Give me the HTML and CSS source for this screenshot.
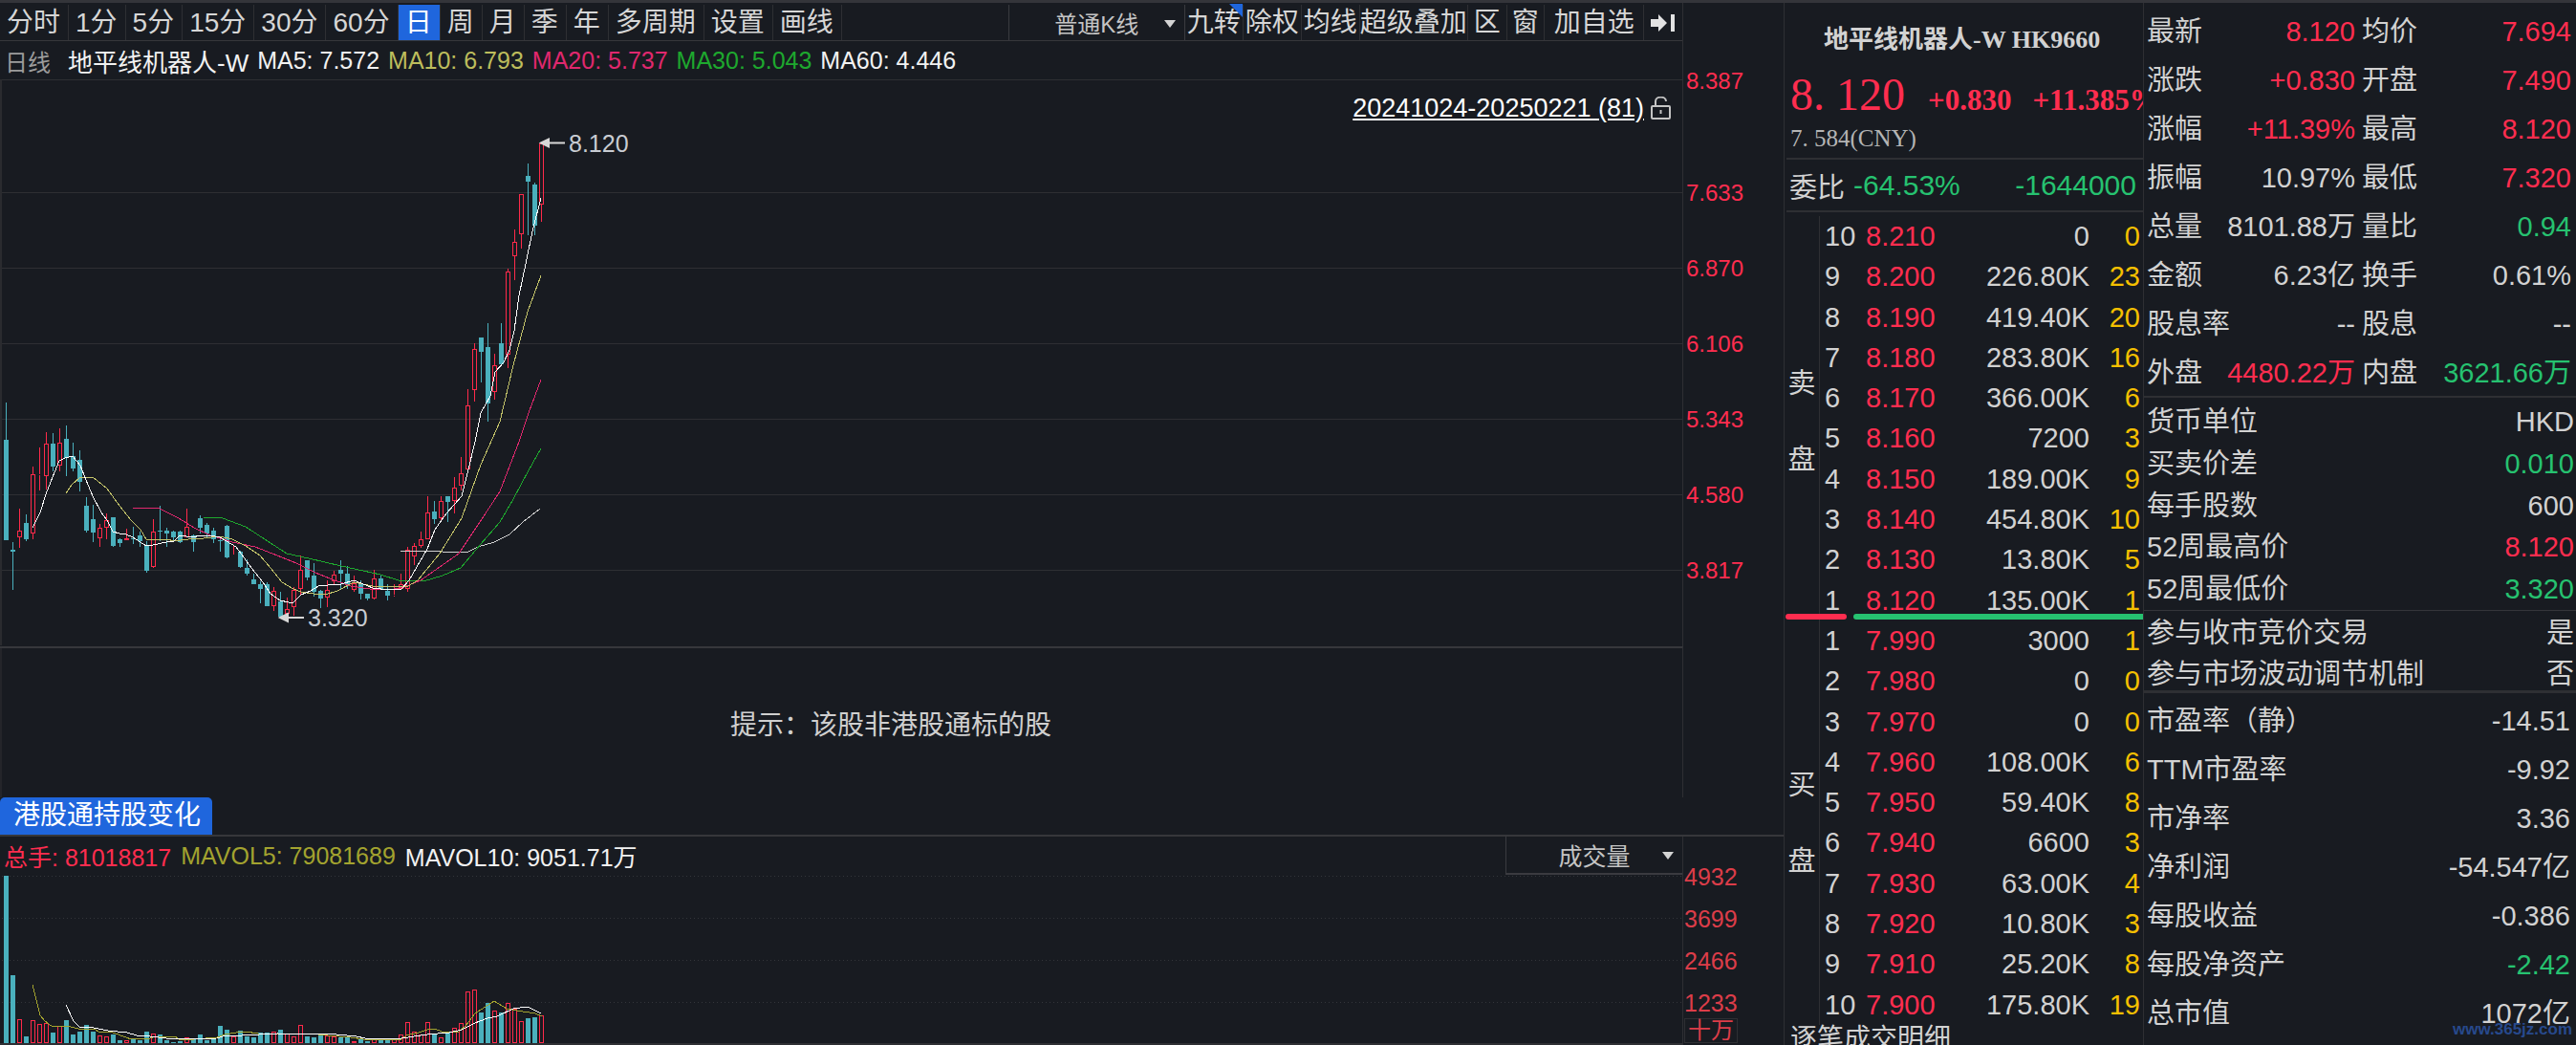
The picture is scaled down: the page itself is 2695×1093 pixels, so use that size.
FILE: index.html
```html
<!DOCTYPE html>
<html lang="zh-CN">
<head>
    <meta charset="UTF-8">
    <title>地平线机器人-W HK9660</title>
    <link rel="stylesheet" href="styles.css">
</head>
<body>

    <div class="app">

        <!-- Charts -->
        <div class="left">
            <div class="upper">
                <div class="chart-col">
                    <div class="toolbar">
                        <span class="tool">分时</span>
                        <span class="tool">1分</span>
                        <span class="tool">5分</span>
                        <span class="tool">15分</span>
                        <span class="tool">30分</span>
                        <span class="tool">60分</span>
                        <span class="tool active">日</span>
                        <span class="tool">周</span>
                        <span class="tool">月</span>
                        <span class="tool">季</span>
                        <span class="tool">年</span>
                        <span class="tool">多周期</span>
                        <span class="tool">设置</span>
                        <span class="tool">画线</span>
                        <div class="select kline-select">普通K线</div>
                        <span class="tool tight marked">九转</span>
                        <span class="tool tight">除权</span>
                        <span class="tool tight">均线</span>
                        <span class="tool tighter">超级叠加</span>
                        <span class="tool roomy">区</span>
                        <span class="tool roomy small-pad">窗</span>
                        <span class="tool widest">加自选</span>
                        <span class="tool icon-tool">
                            <svg width="26" height="18" viewBox="0 0 26 18"><path d="M0 5h8V0l9 9-9 9v-5H0z" fill="#e2e2e2"/><rect x="21" y="0" width="4" height="18" fill="#e2e2e2"/></svg>
                        </span>
                    </div>
                    <div class="legend">
                        <span class="period">日线</span>
                        <span class="stock-name">地平线机器人-W</span>
                        <span class="white">MA5: 7.572</span>
                        <span class="olive">MA10: 6.793</span>
                        <span class="pink">MA20: 5.737</span>
                        <span class="leaf">MA30: 5.043</span>
                        <span class="white">MA60: 4.446</span>
                    </div>
                    <div class="kline">
                        <svg id="kline-chart" class="chart-svg" viewBox="0 84 1760 592" preserveAspectRatio="none"></svg>
                        <div class="range">
                            <span class="range-text">20241024-20250221 (81)</span>
                            <svg width="21" height="24" viewBox="0 0 21 24" fill="none" stroke="#c4c4c4" stroke-width="2"><rect x="1" y="10" width="19" height="13" rx="1"/><path d="M5 10V5a5 4 0 0 1 11 0"/><path d="M10.500 14v4"/></svg>
                        </div>
                        <span class="price-tag high-tag">8.120</span>
                        <span class="price-tag low-tag">3.320</span>
                    </div>
                </div>
                <div class="axis">
                    <span>8.387</span>
                    <span>7.633</span>
                    <span>6.870</span>
                    <span>6.106</span>
                    <span>5.343</span>
                    <span>4.580</span>
                    <span>3.817</span>
                </div>
            </div>

            <div class="notice">提示：该股非港股通标的股</div>

            <div class="tabs"><span class="tab">港股通持股变化</span></div>

            <div class="lower">
                <div class="chart-col">
                    <div class="vol-legend">
                        <span class="red">总手: 81018817</span>
                        <span class="mustard">MAVOL5: 79081689</span>
                        <span class="white">MAVOL10: 9051.71万</span>
                        <div class="select vol-select">成交量</div>
                    </div>
                    <div class="vol">
                        <svg id="vol-chart" class="chart-svg" viewBox="0 915 1760 178" preserveAspectRatio="none"></svg>
                    </div>
                </div>
                <div class="vol-axis">
                    <span>4932</span>
                    <span>3699</span>
                    <span>2466</span>
                    <span>1233</span>
                    <span class="unit">十万</span>
                </div>
            </div>
        </div>

        <!-- Quote and order book -->
        <div class="middle">
            <div class="quote">
                <div class="quote-name">地平线机器人-W HK9660</div>
                <div class="quote-main">
                    <span class="quote-price">8. 120</span>
                    <span class="quote-change">+0.830</span>
                    <span class="quote-change">+11.385%</span>
                </div>
                <div class="quote-cny">7. 584(CNY)</div>
            </div>
            <div class="ratio">
                <span>委比</span>
                <span class="green ratio-pct">-64.53%</span>
                <span class="green ratio-num">-1644000</span>
            </div>

            <div class="book book-sell">
                <div class="side"><span>卖</span><span>盘</span></div>
                <div class="rows">
                    <div class="row"><span>10</span><span class="red">8.210</span><span class="vol-num">0</span><span class="count">0</span></div>
                    <div class="row"><span>9</span><span class="red">8.200</span><span class="vol-num">226.80K</span><span class="count">23</span></div>
                    <div class="row"><span>8</span><span class="red">8.190</span><span class="vol-num">419.40K</span><span class="count">20</span></div>
                    <div class="row"><span>7</span><span class="red">8.180</span><span class="vol-num">283.80K</span><span class="count">16</span></div>
                    <div class="row"><span>6</span><span class="red">8.170</span><span class="vol-num">366.00K</span><span class="count">6</span></div>
                    <div class="row"><span>5</span><span class="red">8.160</span><span class="vol-num">7200</span><span class="count">3</span></div>
                    <div class="row"><span>4</span><span class="red">8.150</span><span class="vol-num">189.00K</span><span class="count">9</span></div>
                    <div class="row"><span>3</span><span class="red">8.140</span><span class="vol-num">454.80K</span><span class="count">10</span></div>
                    <div class="row"><span>2</span><span class="red">8.130</span><span class="vol-num">13.80K</span><span class="count">5</span></div>
                    <div class="row"><span>1</span><span class="red">8.120</span><span class="vol-num">135.00K</span><span class="count">1</span></div>
                </div>
            </div>

            <div class="balance">
                <div class="balance-red"></div>
                <div class="balance-green"></div>
            </div>

            <div class="book book-buy">
                <div class="side"><span>买</span><span>盘</span></div>
                <div class="rows">
                    <div class="row"><span>1</span><span class="red">7.990</span><span class="vol-num">3000</span><span class="count">1</span></div>
                    <div class="row"><span>2</span><span class="red">7.980</span><span class="vol-num">0</span><span class="count">0</span></div>
                    <div class="row"><span>3</span><span class="red">7.970</span><span class="vol-num">0</span><span class="count">0</span></div>
                    <div class="row"><span>4</span><span class="red">7.960</span><span class="vol-num">108.00K</span><span class="count">6</span></div>
                    <div class="row"><span>5</span><span class="red">7.950</span><span class="vol-num">59.40K</span><span class="count">8</span></div>
                    <div class="row"><span>6</span><span class="red">7.940</span><span class="vol-num">6600</span><span class="count">3</span></div>
                    <div class="row"><span>7</span><span class="red">7.930</span><span class="vol-num">63.00K</span><span class="count">4</span></div>
                    <div class="row"><span>8</span><span class="red">7.920</span><span class="vol-num">10.80K</span><span class="count">3</span></div>
                    <div class="row"><span>9</span><span class="red">7.910</span><span class="vol-num">25.20K</span><span class="count">8</span></div>
                    <div class="row"><span>10</span><span class="red">7.900</span><span class="vol-num">175.80K</span><span class="count">19</span></div>
                </div>
            </div>

            <div class="trades">逐笔成交明细</div>
        </div>

        <!-- Stats -->
        <div class="right">
            <div class="stats">
                <div class="pair"><span>最新</span><span class="red">8.120</span></div>
                <div class="pair"><span>均价</span><span class="red">7.694</span></div>
                <div class="pair"><span>涨跌</span><span class="red">+0.830</span></div>
                <div class="pair"><span>开盘</span><span class="red">7.490</span></div>
                <div class="pair"><span>涨幅</span><span class="red">+11.39%</span></div>
                <div class="pair"><span>最高</span><span class="red">8.120</span></div>
                <div class="pair"><span>振幅</span><span>10.97%</span></div>
                <div class="pair"><span>最低</span><span class="red">7.320</span></div>
                <div class="pair"><span>总量</span><span>8101.88万</span></div>
                <div class="pair"><span>量比</span><span class="green">0.94</span></div>
                <div class="pair"><span>金额</span><span>6.23亿</span></div>
                <div class="pair"><span>换手</span><span>0.61%</span></div>
                <div class="pair"><span>股息率</span><span>--</span></div>
                <div class="pair"><span>股息</span><span>--</span></div>
                <div class="pair"><span>外盘</span><span class="red">4480.22万</span></div>
                <div class="pair"><span>内盘</span><span class="green">3621.66万</span></div>
            </div>

            <div class="info info-market">
                <div class="pair"><span>货币单位</span><span>HKD</span></div>
                <div class="pair"><span>买卖价差</span><span class="green">0.010</span></div>
                <div class="pair"><span>每手股数</span><span>600</span></div>
                <div class="pair"><span>52周最高价</span><span class="red">8.120</span></div>
                <div class="pair"><span>52周最低价</span><span class="green">3.320</span></div>
            </div>

            <div class="info info-rules">
                <div class="pair"><span>参与收市竞价交易</span><span>是</span></div>
                <div class="pair"><span>参与市场波动调节机制</span><span>否</span></div>
            </div>

            <div class="info info-finance">
                <div class="pair"><span>市盈率（静）</span><span>-14.51</span></div>
                <div class="pair"><span>TTM市盈率</span><span>-9.92</span></div>
                <div class="pair"><span>市净率</span><span>3.36</span></div>
                <div class="pair"><span>净利润</span><span>-54.547亿</span></div>
                <div class="pair"><span>每股收益</span><span>-0.386</span></div>
                <div class="pair"><span>每股净资产</span><span class="green">-2.42</span></div>
                <div class="pair"><span>总市值</span><span>1072亿</span></div>
            </div>
        </div>
    </div>

    <div class="watermark">www.365jz.com</div>

    <script src="chart.js"></script>
</body>
</html>
```

FILE: styles.css
```css
* {
    box-sizing: border-box;
}

html, body {
    margin: 0;
    height: 1093px;
    overflow: hidden;
    background-color: #181b21;
}

body {
    font-family: "Liberation Sans", "Noto Sans CJK SC", sans-serif;
    color: #d2d2d2;
    position: relative;
}

.app {
    display: flex;
    height: 1093px;
    border-top: 3px solid #34353a;
}

.red { color: #ff2d4f; }
.green { color: #26c270; }
.white { color: #f2f2f2; }
.olive { color: #bdbd5c; }
.pink { color: #e0286e; }
.leaf { color: #1ea82e; }
.mustard { color: #a3a32f; }

/* Left: charts */
.left {
    width: 1867px;
    flex: none;
    border-right: 1px solid #2e2f33;
}

.upper, .lower {
    display: flex;
}

.upper {
    height: 673px;
}

.chart-col {
    width: 1761px;
    flex: none;
    border-right: 1px solid #2e2f33;
}

.toolbar {
    display: flex;
    height: 40px;
    padding-top: 2px;
    border-bottom: 1px solid #36373b;
}

.tool {
    display: flex;
    align-items: center;
    flex: none;
    padding: 0 8px 0 7px;
    font-size: 28px;
    line-height: 36px;
    border-right: 1px solid #2e2f33;
    color: #d6d6d6;
}

.tool.active {
    background-color: #1f66dd;
    color: white;
}

.tool.tight { padding: 0 2px; }
.tool.tighter { padding: 0; }
.tool.roomy { padding: 0 6px; }
.tool.small-pad { padding: 0 5px; }
.tool.widest { padding: 0 9px 0 10px; }
.tool.icon-tool { padding: 0 7px; border-right: 0; }

.tool.marked {
    position: relative;
}

.tool.marked::after {
    content: "";
    position: absolute;
    top: -1px;
    right: 0;
    border-top: 14px solid #1f66dd;
    border-left: 14px solid transparent;
}

.select {
    position: relative;
    display: flex;
    align-items: center;
    justify-content: center;
    flex: none;
    font-size: 24px;
    color: #c4c4c4;
    border-left: 1px solid #3a3b40;
    border-right: 1px solid #3a3b40;
}

.select::after {
    content: "";
    position: absolute;
    right: 9px;
    top: 50%;
    margin-top: -3px;
    border-top: 8px solid #d4d4d4;
    border-left: 6px solid transparent;
    border-right: 6px solid transparent;
}

.kline-select {
    width: 185px;
    margin-left: 174px;
}

.legend {
    display: flex;
    align-items: center;
    gap: 9px;
    height: 41px;
    padding-left: 5px;
    font-size: 25px;
    border-bottom: 1px solid #2e2f33;
}

.period {
    font-size: 24px;
    color: #9c9c9c;
    margin-right: 9px;
}

.stock-name {
    font-size: 26px;
    color: #f2f2f2;
}

.kline {
    position: relative;
    height: 592px;
    margin-top: -1px;
}

.chart-svg {
    display: block;
    width: 100%;
    height: 100%;
}

.range {
    position: absolute;
    right: 12px;
    top: 16px;
    display: flex;
    align-items: center;
    gap: 7px;
}

.range-text {
    font-size: 27px;
    line-height: 28px;
    color: white;
    text-decoration: underline;
}

.price-tag {
    position: absolute;
    font-size: 25px;
    line-height: 28px;
    color: #c8ccd2;
}

.high-tag {
    left: 595px;
    top: 53px;
}

.low-tag {
    left: 322px;
    top: 549px;
}

.axis {
    display: flex;
    flex-direction: column;
    padding: 68px 0 0 3px;
    font-size: 24px;
    line-height: 28px;
    color: #ff2d4f;
}

.axis span {
    margin-bottom: 51px;
}

.axis span:first-child {
    margin-bottom: 89px;
}

.notice {
    display: flex;
    align-items: center;
    justify-content: center;
    width: 1761px;
    height: 158px;
    padding-left: 104px;
    font-size: 28px;
    color: #cfcfcf;
    border-top: 2px solid #36373b;
    border-right: 1px solid #2e2f33;
    box-shadow: inset 2px 0 #24252a;
}

.tabs {
    display: flex;
    align-items: flex-end;
    height: 41px;
    border-bottom: 2px solid #36373b;
}

.tab {
    padding: 0 12px 0 14px;
    height: 39px;
    font-size: 28px;
    line-height: 38px;
    color: white;
    background-color: #1f66dd;
    border-radius: 5px 5px 0 0;
}

.vol-legend {
    display: flex;
    align-items: center;
    gap: 10px;
    height: 40px;
    padding-left: 4px;
    font-size: 25px;
}

.vol-select {
    width: 185px;
    height: 40px;
    margin-left: auto;
    font-size: 25px;
    border-right: 0;
    border-bottom: 2px solid #3a3b40;
}

.vol {
    height: 178px;
}

.vol-axis {
    display: flex;
    flex-direction: column;
    align-items: flex-start;
    padding: 28px 0 0 1px;
    font-size: 25px;
    line-height: 28px;
    color: #dc3d49;
}

.vol-axis span {
    height: 44px;
}

.vol-axis .unit {
    height: 26px;
    margin-top: -14px;
    padding: 0 3px;
    font-size: 24px;
    line-height: 24px;
    border: 1px solid #2e2f33;
}

/* Middle: quote and order book */
.middle {
    width: 376px;
    flex: none;
    padding-top: 1px;
    border-right: 1px solid #2e2f33;
}

.quote {
    height: 163px;
    margin-left: 2px;
    padding-left: 4px;
    overflow: hidden;
    font-family: "Liberation Serif", "Noto Sans CJK SC", serif;
    border-bottom: 2px solid #2e2f33;
}

.quote-name {
    height: 73px;
    padding: 20px 0 0 35px;
    font-size: 26px;
    line-height: 36px;
    font-weight: bold;
    color: #d2d2d2;
    white-space: nowrap;
}

.quote-main {
    display: flex;
    align-items: baseline;
    height: 44px;
    white-space: nowrap;
    color: #ff2d4f;
}

.quote-price {
    font-size: 48px;
    line-height: 44px;
    margin-right: 24px;
}

.quote-change {
    font-size: 31px;
    font-weight: bold;
    margin-right: 22px;
}

.quote-cny {
    margin-top: 10px;
    font-size: 25px;
    line-height: 28px;
    color: #b4b4b4;
}

.ratio {
    display: flex;
    align-items: center;
    height: 55px;
    margin-left: 2px;
    padding: 0 7px 0 3px;
    font-size: 29px;
    border-bottom: 2px solid #2e2f33;
}

.ratio .green {
    font-size: 30px;
}

.ratio-pct {
    margin-left: 9px;
}

.ratio-num {
    margin-left: auto;
}

.book {
    display: flex;
    font-size: 29px;
}

.book-sell {
    padding-top: 4px;
}

.side {
    display: flex;
    flex-direction: column;
    justify-content: center;
    align-items: center;
    gap: 39px;
    width: 37px;
    flex: none;
    line-height: 41px;
    border-right: 1px solid #2e2f33;
}

.book-sell .side {
    padding-top: 9px;
}

.book-buy .side {
    padding-top: 3px;
}

.rows {
    flex: 1;
}

.row {
    display: grid;
    grid-template-columns: 43px 74px 160px 53px;
    height: 42.3px;
    padding-left: 5px;
    line-height: 42px;
}

.vol-num, .count {
    text-align: right;
}

.count {
    color: #f5c000;
}

.balance {
    display: flex;
    height: 6px;
    margin-top: -7px;
    margin-bottom: 1px;
    position: relative;
}

.balance-red {
    width: 64px;
    margin-left: 1px;
    background-color: #ff2d4f;
    border-radius: 3px;
}

.balance-green {
    flex: 1;
    margin-left: 7px;
    background-color: #26c270;
    border-radius: 3px 0 0 3px;
}

.trades {
    padding-left: 6px;
    font-size: 28px;
    line-height: 30px;
}

/* Right: stats */
.right {
    flex: 1;
    min-width: 0;
    font-size: 29px;
}

.pair {
    display: flex;
    justify-content: space-between;
    white-space: nowrap;
}

.stats {
    display: grid;
    grid-template-columns: 218px 219px;
    column-gap: 7px;
    height: 413px;
    padding: 5px 0 0 3px;
    border-bottom: 2px solid #2e2f33;
}

.stats .pair {
    height: 51px;
    line-height: 51px;
}

.info {
    padding-left: 3px;
}

.info-market {
    height: 223px;
    padding-top: 4px;
    padding-right: 2px;
    border-bottom: 1px solid #34353a;
}

.info-market .pair {
    height: 43.75px;
    line-height: 43px;
}

.info-rules {
    height: 86px;
    padding-right: 2px;
    border-bottom: 3px solid #2e2f33;
}

.info-rules .pair {
    height: 43px;
    line-height: 46px;
}

.info-finance {
    padding-top: 4px;
    padding-right: 6px;
}

.info-finance .pair {
    height: 51px;
    line-height: 50px;
}

.watermark {
    position: absolute;
    right: 4px;
    bottom: 6px;
    font-size: 17px;
    line-height: 20px;
    font-weight: bold;
    color: #27498c;
}
```

FILE: chart.js
```js
// candles: [high, bodyTop, bodyBottom, low, up], all in page pixels
var candles = [
    [422,461,566,566,0],[568,576,578,618,0],[533,556,563,574,1],[539,548,565,567,0],[489,497,559,565,1],
    [469,497,498,514,1],[453,465,499,513,1],[454,465,489,494,0],[449,464,488,494,1],[446,460,480,499,0],
    [464,478,491,494,0],[472,482,505,515,0],[521,530,556,558,0],[529,544,558,568,0],[549,553,564,573,1],
    [538,545,553,565,1],[542,542,572,573,0],[564,565,569,573,0],[554,564,566,566,1],[552,564,565,570,0],
    [557,561,567,573,0],[567,572,598,600,0],[544,557,594,595,1],[530,556,557,567,0],[553,556,559,573,0],
    [556,557,563,567,0],[556,557,568,569,0],[533,552,563,563,1],[560,561,568,578,0],[540,543,553,559,0],
    [548,550,559,563,0],[553,556,565,569,0],[563,566,567,578,0],[550,551,584,585,0],[571,581,582,582,1],
    [577,578,594,595,0],[586,595,601,603,0],[601,607,612,612,0],[609,612,617,632,0],[610,612,635,635,0],
    [615,619,635,640,1],[620,630,646,646,0],[626,638,643,645,1],[615,618,636,645,1],[582,597,617,623,1],
    [587,587,605,608,0],[590,603,620,625,0],[618,619,627,637,0],[608,618,626,636,1],[598,602,609,612,1],
    [587,597,601,617,0],[593,601,612,617,0],[603,611,618,620,1],[608,612,622,628,0],[622,622,627,629,0],
    [597,606,627,628,1],[603,606,617,618,0],[612,619,624,629,0],[612,623,624,625,1],[601,612,617,618,1],
    [573,576,617,620,1],[569,572,583,592,1],[557,565,572,574,1],[520,537,565,565,1],[525,536,544,549,0],
    [520,525,543,547,1],[520,520,526,547,0],[500,511,525,538,1],[479,496,509,514,1],[408,425,492,495,1],
    [360,366,409,421,1],[354,354,369,401,0],[339,364,423,442,0],[371,383,411,419,1],[339,360,382,382,0],
    [282,285,372,386,1],[241,254,269,294,1],[204,204,246,261,1],[172,185,191,247,0],[192,194,237,247,0],
    [151,151,215,233,1]
];

// top of each volume bar, the bars stand on y = 1091
var volumes = [
    916,1020,1066,1084,1067,1071,1070,1080,1073,1067,1082,1079,1072,1079,1083,1084,1082,1088,1088,1087,
    1088,1079,1081,1082,1088,1090,1089,1085,1086,1082,1088,1086,1073,1077,1084,1078,1084,1085,1080,1080,
    1079,1077,1081,1084,1072,1084,1085,1082,1083,1084,1085,1084,1089,1087,1089,1086,1087,1087,1087,1082,
    1069,1079,1082,1069,1082,1085,1080,1075,1070,1037,1035,1059,1049,1057,1059,1049,1055,1068,1065,1064,
    1062
];

var ma5 = "34,553 42,537 48,518 55,500 62,483 68,480 76,478 84,488 90,503 97,520 106,537 112,545 118,557 125,559 132,560 139,563 153,572 160,571 174,568 182,567 188,561 195,562 202,563 209,561 220,561 230,563 237,567 247,573 258,588 267,600 275,610 283,622 293,629 302,631 307,631 315,623 325,619 333,614 343,613 357,612 370,608 378,611 390,616 407,618 420,617 428,608 447,575 455,555 467,538 483,520 490,492 497,463 503,433 513,415 518,390 527,380 533,367 538,347 543,310 550,277 557,243 566,208";
var ma10 = "69,517 75,508 83,501 97,500 112,512 125,530 137,545 147,555 153,565 175,565 182,567 197,565 213,564 230,562 243,565 257,572 272,582 283,595 295,610 307,617 315,620 328,622 340,623 353,619 370,610 380,612 390,614 417,615 427,614 437,608 460,580 483,543 503,487 523,442 537,383 552,327 566,289";
var ma20 = "139,532 150,533 165,532 187,543 203,553 220,561 243,568 267,573 290,582 310,590 330,600 350,608 367,614 387,617 407,618 423,615 440,608 480,580 502,547 523,515 543,463 553,433 566,398";
var ma30 = "213,542 233,543 257,552 280,567 300,580 323,585 357,593 380,598 398,602 417,608 443,609 463,603 482,595 503,570 523,547 537,523 553,493 566,470";
var ma60 = "419,577 445,577 463,578 490,578 500,573 517,568 533,560 547,547 565,533";
var mavol5 = "34,1030 37,1042 39,1050 42,1062 47,1068 55,1074 62,1073 70,1073 82,1076 100,1077 103,1079 118,1080 132,1085 137,1087 157,1086 160,1085 183,1084 187,1087 203,1087 227,1085 235,1082 247,1080 257,1079 270,1081 297,1081 323,1081 343,1083 367,1085 380,1087 420,1087 425,1083 438,1080 447,1077 455,1076 462,1079 480,1079 487,1073 497,1060 517,1047 530,1055 547,1058 560,1060 567,1063";
var mavol10 = "69,1051 77,1068 83,1074 98,1075 113,1078 133,1080 143,1083 157,1084 183,1087 227,1086 233,1084 253,1083 290,1081 352,1082 373,1084 382,1086 420,1086 440,1083 447,1082 470,1080 483,1077 497,1070 510,1065 520,1063 537,1055 552,1053 566,1060";

var UP_COLOR = "#ff2a4a";
var DOWN_COLOR = "#4ab0bd";

function bar(left, top, bottom, up) {
    var h = Math.max(bottom - top, 1);
    if (up) {
        return '<rect x="' + (left + 0.5) + '" y="' + (top + 0.5) + '" width="4" height="' + Math.max(h - 1, 0) + '" fill="none" stroke="' + UP_COLOR + '"/>';
    }
    return '<rect x="' + left + '" y="' + top + '" width="5" height="' + h + '" fill="' + DOWN_COLOR + '"/>';
}

function wick(x, top, bottom, up) {
    if (bottom <= top) return '';
    return '<rect x="' + x + '" y="' + top + '" width="1" height="' + (bottom - top) + '" fill="' + (up ? UP_COLOR : DOWN_COLOR) + '"/>';
}

// the lines in the app are not antialiased
function line(points, color) {
    return '<polyline points="' + points + '" fill="none" stroke="' + color + '" stroke-width="1" shape-rendering="crispEdges"/>';
}

function drawKline() {
    var html = '<rect x="0" y="84" width="2" height="592" fill="#2a2b2f"/>';
    [202, 281, 360, 439, 518, 597].forEach(function (y) {
        html += '<rect x="2" y="' + y + '" width="1758" height="1" fill="#2e2f33"/>';
    });
    candles.forEach(function (c, i) {
        var x = 6 + 7 * i;
        html += wick(x, c[0], c[1], c[4]) + wick(x, c[2], c[3], c[4]);
        html += bar(x - 2, c[1], c[2], c[4]);
    });
    html += line(ma60, "#d0d0d0") + line(ma30, "#1ea82e") + line(ma20, "#e0286e") + line(ma10, "#c4c46a") + line(ma5, "#ffffff");
    // high and low markers
    html += '<path d="M591 150.500H573M566 150.500l8-4v8z" stroke="#d8d8d8" stroke-width="2" fill="#d8d8d8"/>';
    html += '<path d="M318 647H300M293 647l8-4v8z" stroke="#d8d8d8" stroke-width="2" fill="#d8d8d8"/>';
    document.getElementById("kline-chart").innerHTML = html;
}

function drawVolume() {
    var html = '';
    [916, 960, 1004, 1048].forEach(function (y) {
        html += '<line x1="2" x2="1760" y1="' + (y + 0.5) + '" y2="' + (y + 0.5) + '" stroke="#33353a" stroke-dasharray="1 3"/>';
    });
    volumes.forEach(function (top, i) {
        html += bar(4 + 7 * i, top, 1091, candles[i][4]);
    });
    html += '<rect x="0" y="1091" width="1760" height="2" fill="#2e2f33"/>';
    html += line(mavol5, "#a3a32f") + line(mavol10, "#ffffff");
    document.getElementById("vol-chart").innerHTML = html;
}

drawKline();
drawVolume();
```
